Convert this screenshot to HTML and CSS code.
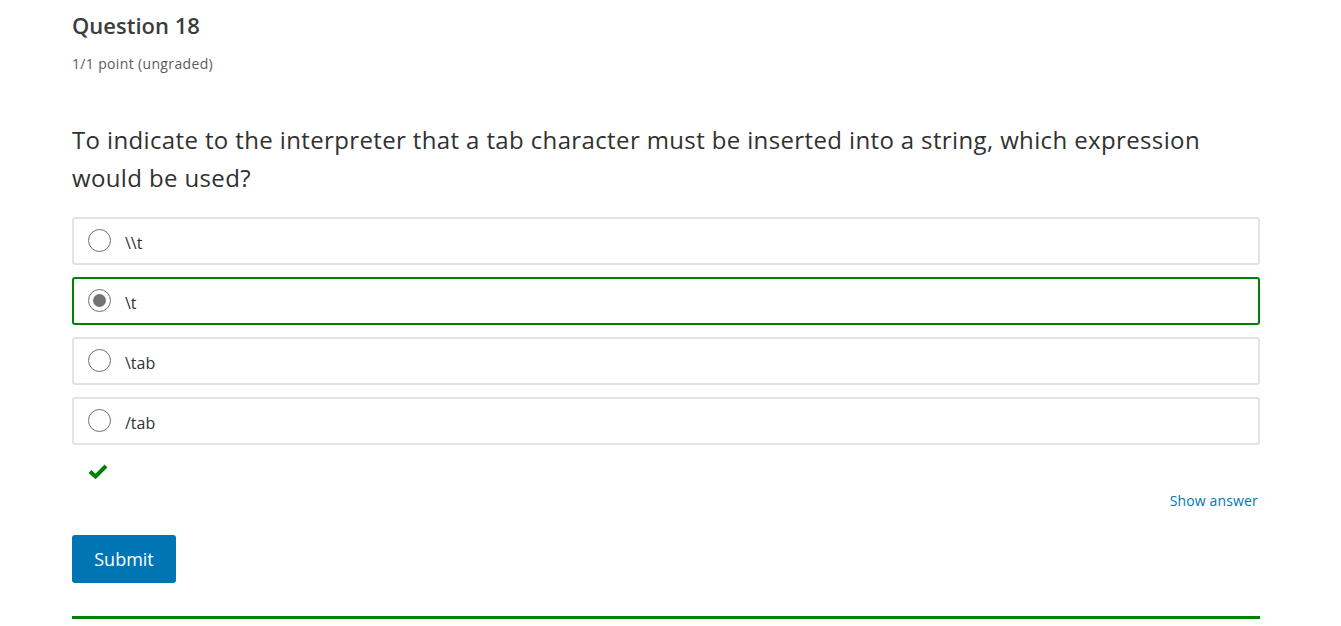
FILE: index.html
```html
<!DOCTYPE html>
<html>
<head>
<meta charset="utf-8">
<link rel="stylesheet" href="styles.css">
</head>
<body>
<div class="problem">
  <h3 class="title">Question 18</h3>
  <div class="points">1/1 point (ungraded)</div>
  <p class="question">To indicate to the interpreter that a tab character must be inserted into a string, which expression would be used?</p>
  <div class="choices">
    <label class="choice"><span class="radio"></span><span class="label">\\t</span></label>
    <label class="choice selected"><span class="radio checked"></span><span class="label">\t</span></label>
    <label class="choice"><span class="radio"></span><span class="label">\tab</span></label>
    <label class="choice"><span class="radio"></span><span class="label">/tab</span></label>
  </div>
  <div class="status">
    <svg width="20" height="16" viewBox="0 0 20 16"><path d="M2 8.5 L7.5 13.5 L18 3" fill="none" stroke="#008100" stroke-width="4" stroke-linejoin="miter"/></svg>
  </div>
  <div class="actions-right"><a class="show-answer">Show answer</a></div>
  <div class="actions"><button class="submit">Submit</button></div>
  <div class="rule"></div>
</div>
</body>
</html>
```
FILE: styles.css
```css
html, body { margin: 0; padding: 0; background: #fff; }
body { font-family: "Open Sans", "Noto Sans", sans-serif; color: #313131; }
.problem { width: 1188px; margin-left: 72px; padding-top: 8px; }
.title { margin: 0; font-size: 22px; line-height: 34px; font-weight: 600; color: #3c3c3c; }
.points { margin-top: 12px; font-size: 14px; line-height: 20px; color: #5b5b5b; letter-spacing: 0.35px; }
.question { margin: 47px 0 0; font-size: 24px; line-height: 38px; color: #313131; font-weight: 400; letter-spacing: 0.37px; }
.choices { margin-top: 20px; display: flex; flex-direction: column; gap: 12px; }
.choice { box-sizing: border-box; height: 48px; border: 2px solid #e3e3e3; border-radius: 3px; display: flex; align-items: center; padding-left: 14px; }
.choice.selected { border-color: #008100; }
.radio { box-sizing: border-box; width: 23px; height: 23px; border: 1px solid #6f6f6f; border-radius: 50%; display: flex; align-items: center; justify-content: center; margin-top: -1px; }
.radio.checked::after { content: ""; width: 13px; height: 13px; border-radius: 50%; background: #747474; }
.label { margin-left: 14px; font-size: 16px; line-height: 22px; padding-top: 4px; color: #313131; }
.status { margin-top: 18px; height: 16px; padding-left: 16px; }
.status svg { display: block; }
.actions-right { margin-top: 12px; display: flex; justify-content: flex-end; padding-right: 2px; }
.show-answer { font-size: 14px; line-height: 20px; color: #0075b4; letter-spacing: 0.15px; }
.actions { margin-top: 24px; }
.submit { display: block; width: 104px; height: 48px; border: none; border-radius: 3px; background: #0075b4; color: #fff; font-family: inherit; font-size: 18px; padding: 0; }
.rule { margin-top: 33px; height: 3px; background: #008100; }
```
